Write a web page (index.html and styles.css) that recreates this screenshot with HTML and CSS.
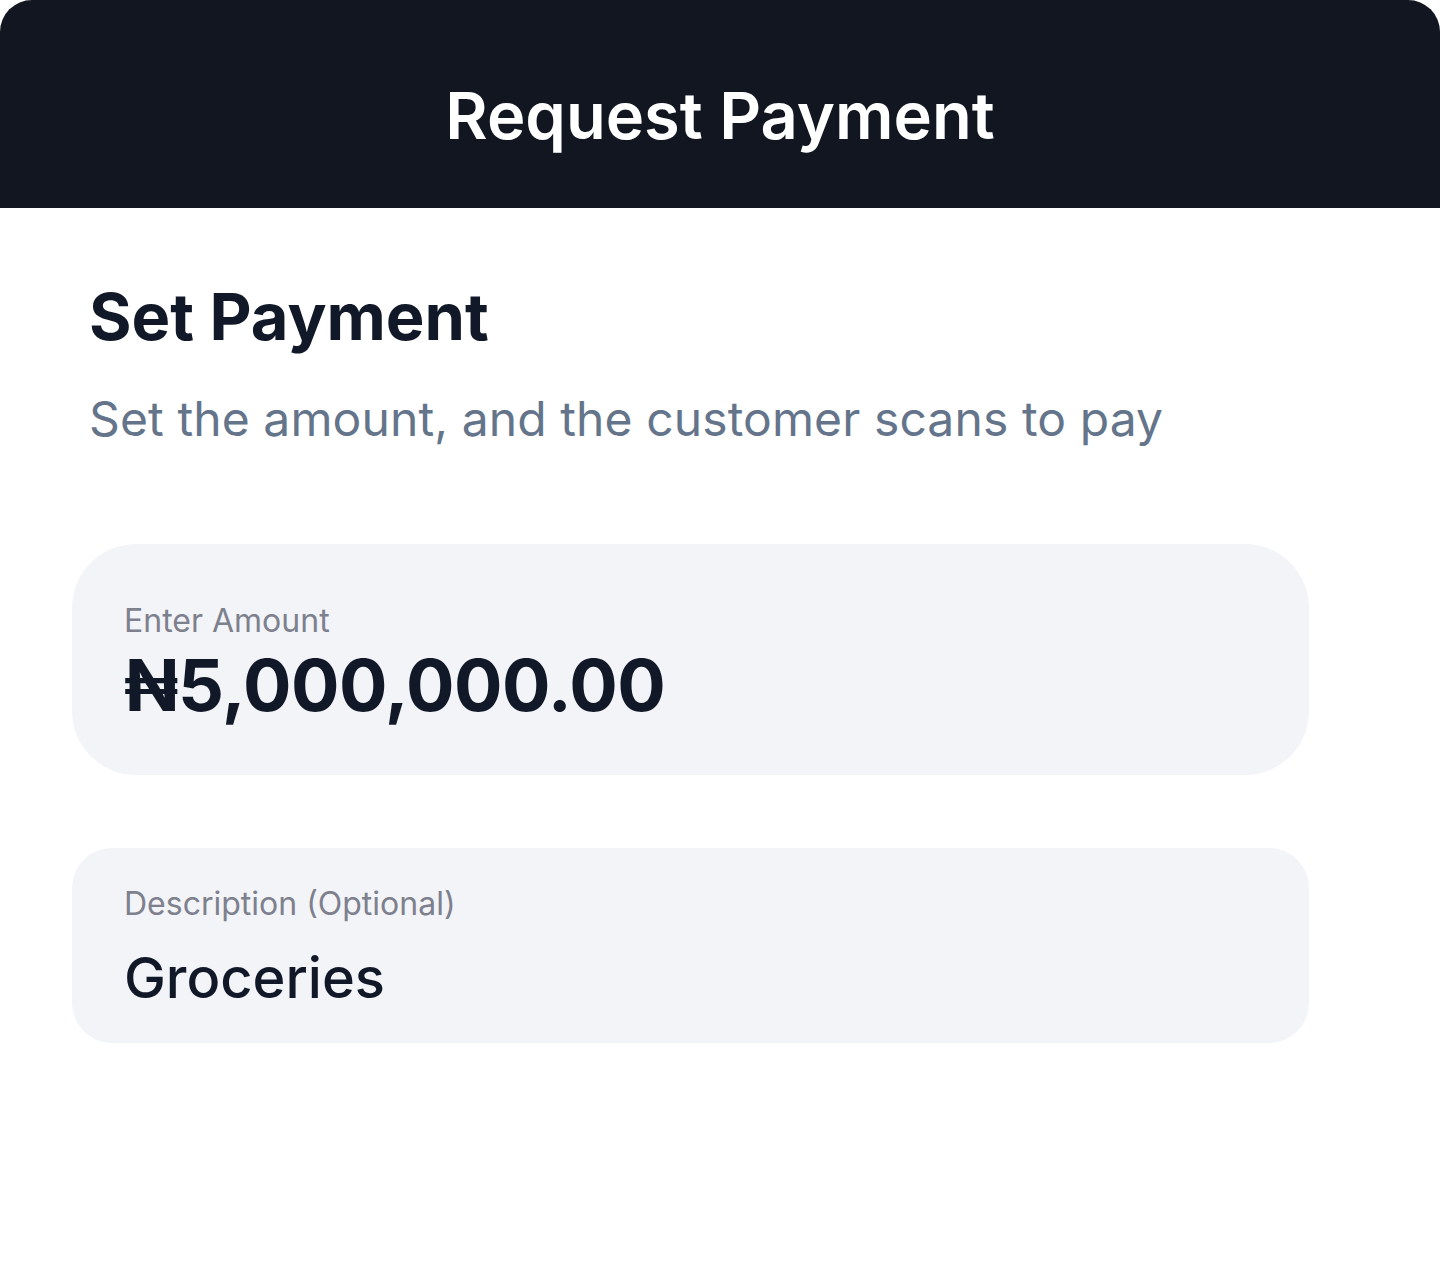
FILE: index.html
```html
<!DOCTYPE html>
<html lang="en">
<head>
<meta charset="utf-8">
<title>Request Payment</title>
<link rel="stylesheet" href="styles.css">
</head>
<body>
<div class="screen">
  <header class="topbar">
    <h1 class="topbar-title">Request Payment</h1>
  </header>
  <main class="content">
    <h2 class="heading">Set Payment</h2>
    <p class="subtitle">Set the amount, and the customer scans to pay</p>
    <section class="field field-amount">
      <div class="field-label">Enter Amount</div>
      <div class="amount-value">₦5,000,000.00</div>
    </section>
    <section class="field field-desc">
      <div class="field-label">Description (Optional)</div>
      <div class="desc-value">Groceries</div>
    </section>
  </main>
</div>
</body>
</html>
```

FILE: styles.css
```css
* { box-sizing: border-box; }
html, body {
  margin: 0;
  padding: 0;
  background: #ffffff;
}
body {
  font-family: Inter, "Noto Sans", "Liberation Sans", sans-serif;
  color: #111827;
}
.screen {
  width: 1440px;
  min-height: 1280px;
  background: #ffffff;
}
.topbar {
  height: 208px;
  background: #121620;
  border-radius: 32px 32px 0 0;
  padding-top: 77px;
  display: flex;
  justify-content: center;
}
.topbar-title {
  margin: 0;
  font-size: 65px;
  line-height: 78px;
  font-weight: 600;
  color: #ffffff;
}
.content {
  padding: 70px 131px 0 72px;
}
.heading {
  margin: 0 0 0 17px;
  font-size: 65px;
  line-height: 78px;
  font-weight: 700;
  color: #111827;
}
.subtitle {
  margin: 27px 0 0 17px;
  font-size: 48px;
  line-height: 72px;
  font-weight: 400;
  letter-spacing: 0.1px;
  color: #64748b;
}
.field {
  background: #f3f4f8;
  padding-left: 52px;
}
.field-amount {
  margin-top: 89px;
  border-radius: 64px;
  padding-top: 57px;
  padding-bottom: 47px;
}
.field-desc {
  margin-top: 73px;
  border-radius: 40px;
  padding-top: 36px;
  padding-bottom: 31px;
}
.field-label {
  font-size: 32px;
  line-height: 40px;
  color: #7d808d;
}
.amount-value {
  margin-top: 1px;
  font-size: 72px;
  line-height: 86.4px;
  font-weight: 700;
  letter-spacing: -0.6px;
  color: #111827;
}
.desc-value {
  margin-top: 20px;
  font-size: 56px;
  line-height: 68px;
  font-weight: 500;
  color: #111827;
}
```
